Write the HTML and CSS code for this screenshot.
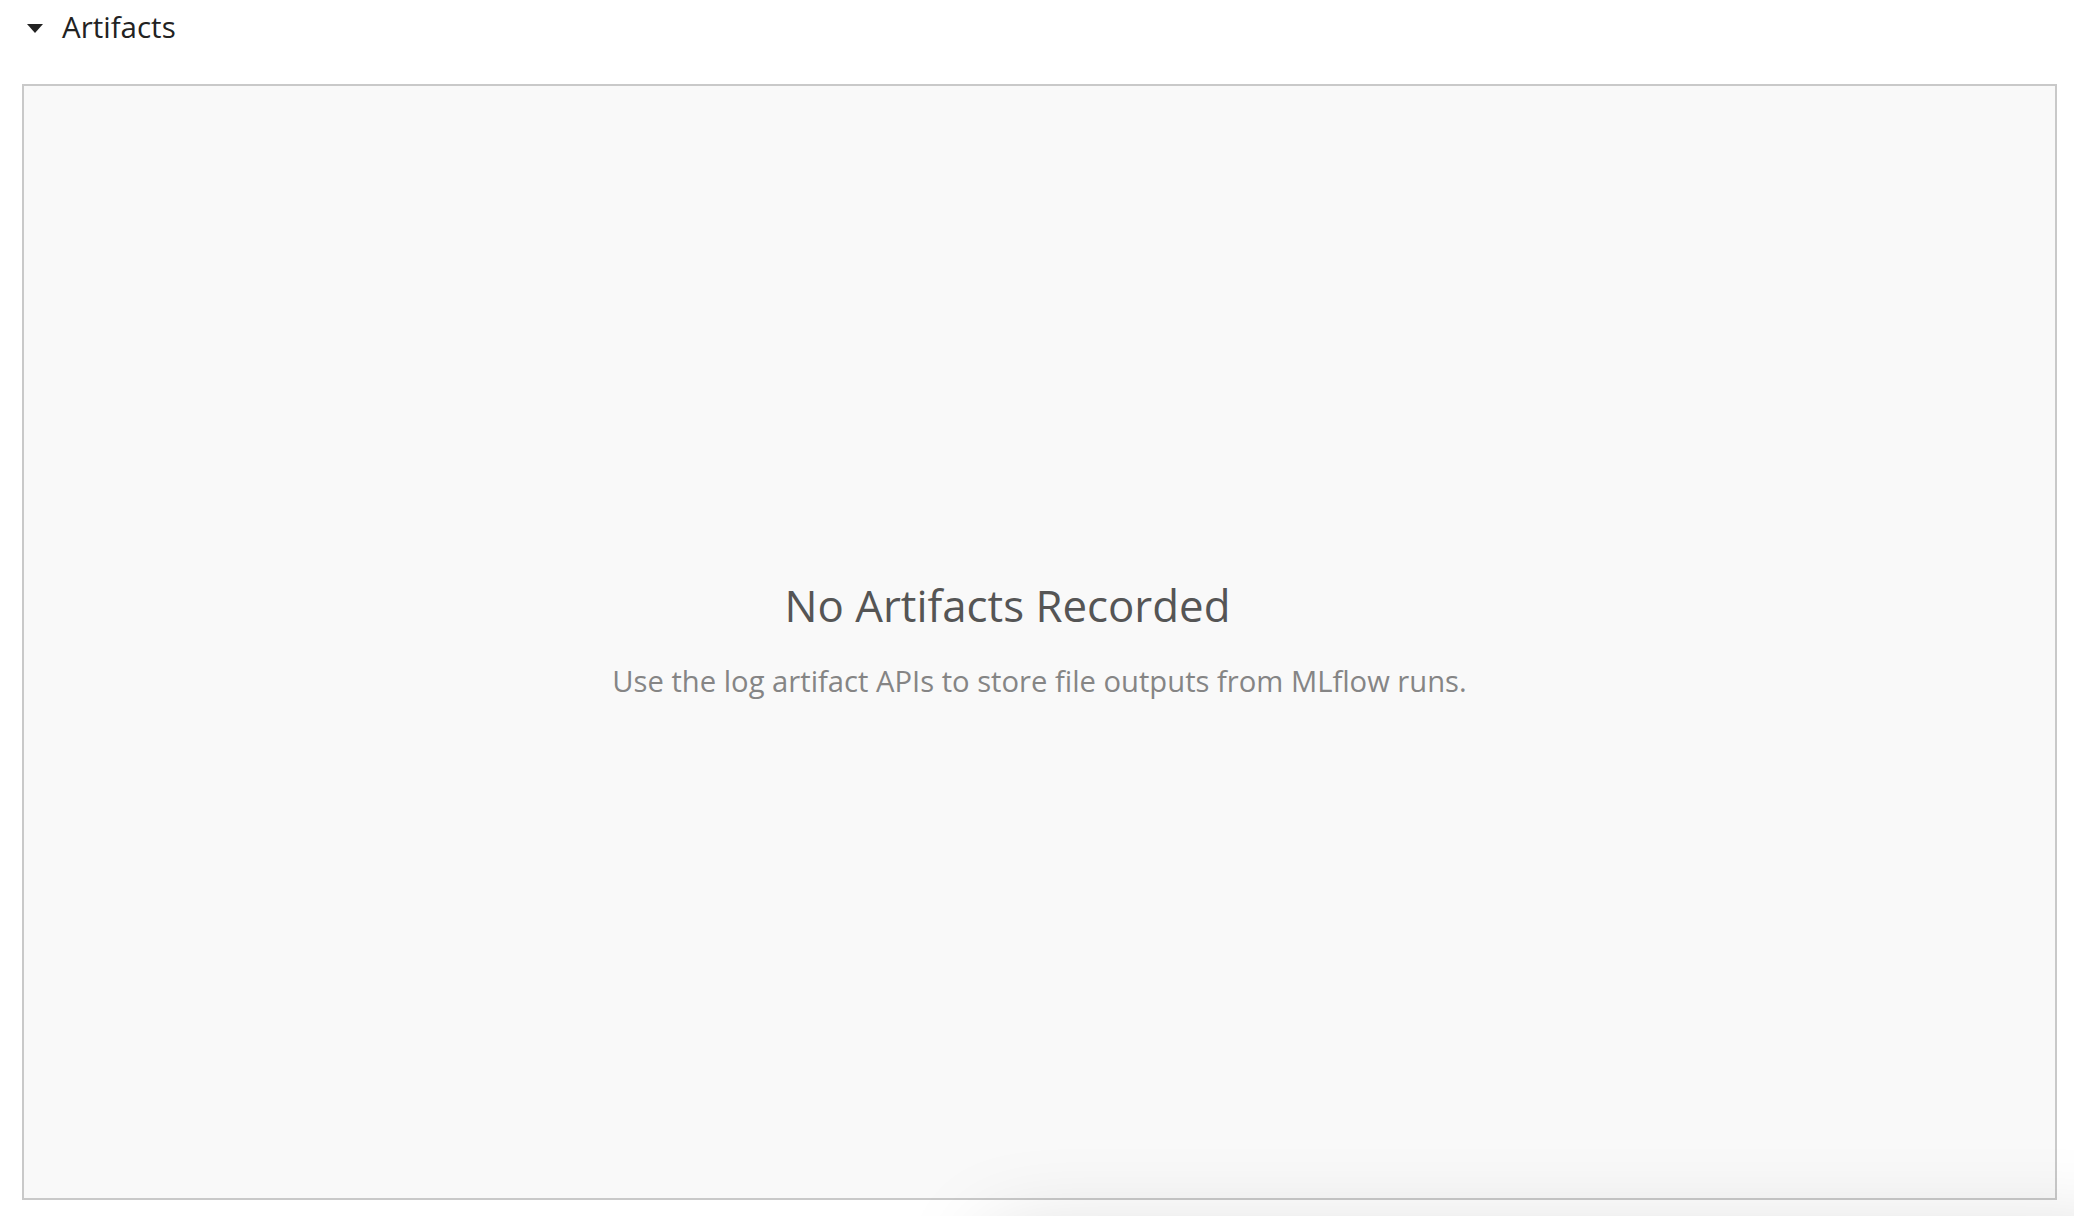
FILE: index.html
```html
<!DOCTYPE html>
<html lang="en">
<head>
<meta charset="utf-8">
<title>Artifacts</title>
<link rel="stylesheet" href="styles.css">
</head>
<body>
  <section class="section">
    <div class="section-header">
      <svg class="caret" width="16" height="9" viewBox="0 0 16 9"><path d="M0 0 L16 0 L8 9 Z" fill="#222"/></svg>
      <span class="section-title">Artifacts</span>
    </div>
    <div class="artifact-box">
      <div class="empty">
        <div class="empty-title">No Artifacts Recorded</div>
        <div class="empty-desc">Use the log artifact APIs to store file outputs from MLflow runs.</div>
      </div>
    </div>
  </section>
  <div class="floating-shadow"></div>
</body>
</html>
```
FILE: styles.css
```css
html, body {
  margin: 0;
  padding: 0;
  background: #ffffff;
  font-family: "Open Sans", "Noto Sans", "Liberation Sans", sans-serif;
  overflow: hidden;
}

.section {
  padding: 0 17px 16px 22px;
}

.section-header {
  display: flex;
  align-items: center;
  height: 54px;
  padding-left: 5px;
  gap: 19px;
}

.caret {
  display: block;
  margin-top: 3px;
}

.section-title {
  font-size: 29.5px;
  color: #222;
  line-height: 1;
}

.artifact-box {
  box-sizing: border-box;
  height: 1116px;
  margin-top: 30px;
  border: 2px solid #c9c9c9;
  background: #f9f9f9;
  display: flex;
  align-items: center;
  justify-content: center;
}

.empty {
  text-align: center;
  margin-top: -6px;
}

.empty-title {
  font-size: 43.8px;
  color: #555555;
  line-height: 1.2;
  padding-right: 64px;
}

.empty-desc {
  font-size: 29.2px;
  color: #858585;
  margin-top: 32px;
  line-height: 1.2;
}

.floating-shadow {
  position: fixed;
  left: 990px;
  right: -60px;
  bottom: -120px;
  height: 100px;
  background: #ffffff;
  box-shadow: 0 0 90px rgba(0, 0, 0, 0.17);
  pointer-events: none;
}
```
